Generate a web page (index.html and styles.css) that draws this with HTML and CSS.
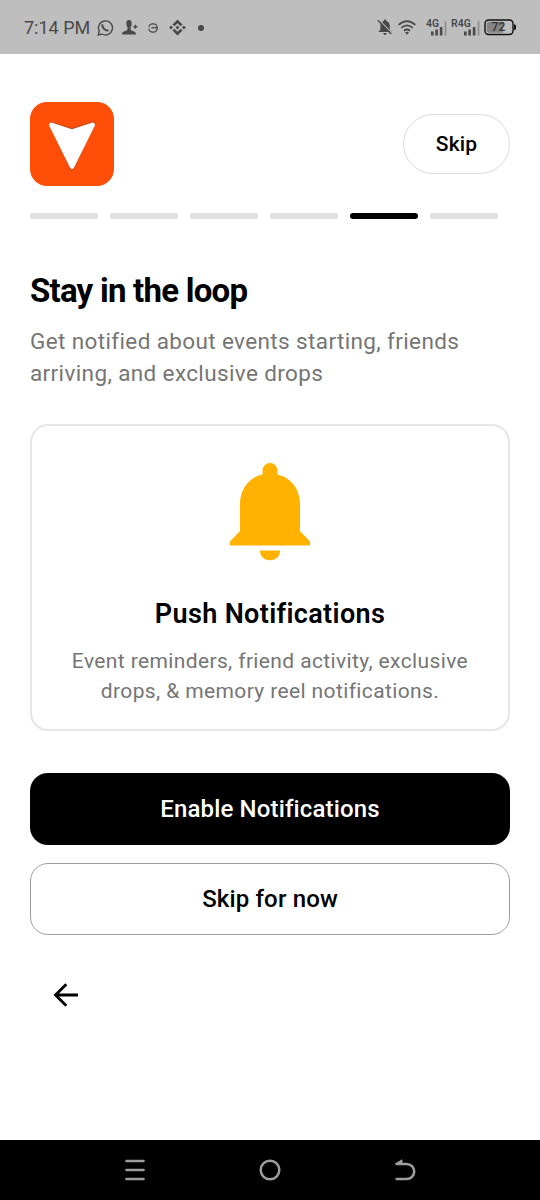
FILE: index.html
```html
<!DOCTYPE html>
<html lang="en">
<head>
<meta charset="utf-8">
<title>Stay in the loop</title>
<link rel="stylesheet" href="styles.css">
</head>
<body>
<div class="screen">
  <header class="status">
    <span class="clock">7:14 PM</span>
    <div class="status-left">
      <svg class="i-chat" width="17" height="18" viewBox="0 0 17 18" fill="none" stroke="#494949" stroke-width="1.4"><path d="M1.200 16.100l1.100-3.900A7 7 0 1 1 5 15z"/><path d="M5.600 5.400c-.7 1.500.2 3.200 1.600 4.600 1.400 1.300 3 2 4.300 1" stroke-width="1.900"/></svg>
      <svg class="i-person" width="16" height="15" viewBox="0 0 16 15" fill="#494949"><path d="M7 0C4.800 0 4.300 1.500 4.400 4c.1 2 .8 3 1.200 3.700 0 1.700-.3 2.500-1.500 3C1.500 11.700.3 11.500 0 14.500h14c-.3-3-1.600-2.800-4-3.800-1.200-.5-1.500-1.300-1.500-3C9 7 9.500 6 9.600 4 9.700 1.500 9.200 0 7 0zM12.700 4.700h1.400v1.300h1.300v1.400h-1.300v1.300h-1.400V7.400h-1.300V6h1.300z"/></svg>
      <svg class="i-e" width="10" height="10" viewBox="0 0 10 10" fill="none" stroke="#494949" stroke-width="1.300"><rect x=".8" y=".9" width="8.400" height="8.200" rx="3.800"/><path d="M3.400 4.700H9"/><path d="M.8 3.800v2" stroke="#bebebe" stroke-width="1.600"/></svg>
      <svg class="i-diamond" width="17" height="17" viewBox="0 0 17 17" fill="#494949"><path d="M8.500.4l5 5-1.900 1.900-3.100-3.100-3.100 3.100-1.900-1.900zM8.500 16.600l5-5-1.900-1.900-3.100 3.100-3.100-3.100-1.900 1.900zM8.500 6.600l1.900 1.900-1.900 1.900-1.900-1.900zM2.100 6.600L4 8.500l-1.900 1.900L.2 8.500zM14.900 6.600l1.900 1.900-1.900 1.900L13 8.500z"/></svg>
      <span class="dot"></span>
    </div>
    <div class="status-right">
      <svg class="i-mute" width="16" height="17" viewBox="0 0 16 17"><path d="M8 .6c.8 0 1.300.5 1.300 1.400 2.400.7 3.500 2.500 3.500 5v3.500l2 2.500H1.400l2-2.500V7c0-2.500 1-4.300 3.400-5C6.800 1.100 7.200.6 8 .6zM6.200 14h3.500c0 1.100-.7 1.900-1.700 1.900S6.200 15.100 6.200 14z" fill="#494949"/><path d="M1.900.7l13.400 13.600" stroke="#bebebe" stroke-width="1.200"/><path d="M.8 1.300l13.500 13.800" stroke="#494949" stroke-width="1.400"/></svg>
      <svg class="i-wifi" width="18" height="15" viewBox="0 0 18 15" fill="none" stroke="#494949" stroke-width="1.800"><path d="M.6 4.900q8.400-7.600 16.800 0M3.300 7.900q5.700-5 11.400 0M6 10.800q3-2.500 6 0"/><path d="M7 12.400q2-1.400 4 0L9 14.700z" fill="#494949" stroke="none"/></svg>
      <svg class="i-sig1" width="21" height="30" viewBox="0 -6 21 30"><text x="0" y="8" class="net">4G</text><g fill="#494949"><path d="M5 12.500h2.600v4H5zM9.300 10.500h2.600v6H9.300zM13.800 8h2.600v8.500h-2.600z"/><path d="M18.600 2.300h1.800v14.200h-1.800z" fill="#8f8f8f"/></g></svg>
      <svg class="i-sig2" width="29" height="30" viewBox="0 -6 29 30"><text x="0" y="8" class="net">R4G</text><g fill="#494949"><path d="M13 12.500h2.600v4H13zM17.300 10.500h2.600v6h-2.600zM21.800 8h2.600v8.500h-2.600z"/><path d="M26.600 2.300h1.800v14.200h-1.800z" fill="#8f8f8f"/></g></svg>
      <svg class="i-batt" width="33" height="17" viewBox="0 0 33 17"><rect x="1" y="1" width="28" height="14.500" rx="3.500" fill="#bebebe" stroke="#111" stroke-width="1.400"/><path d="M5 2.700h14v11H5q-2.300 0-2.300-2.200V5Q2.700 2.700 5 2.700z" fill="#858585"/><path d="M30 5.300q2 0 2 2v2q0 2-2 2z" fill="#111"/><text x="7.600" y="12.200" class="level">72</text></svg>
    </div>
  </header>

  <main class="content">
    <div class="top">
      <svg class="logo" width="84" height="84" viewBox="0 0 84 84"><rect width="84" height="84" rx="17" fill="#ff4e08"/><path d="M21.700 22.500L42 29 62.300 22.500 42 65z" fill="#b94a20" stroke="#b94a20" stroke-width="5.200" stroke-linejoin="round"/><path d="M21.400 22.900L42 29.700 62.600 22.900 42 64.500z" fill="#fff" stroke="#fff" stroke-width="4.600" stroke-linejoin="round"/></svg>
      <button class="skip">Skip</button>
    </div>
    <div class="steps"><i></i><i></i><i></i><i></i><i class="active"></i><i></i></div>
    <h1 class="title">Stay in the loop</h1>
    <p class="lead">Get notified about events starting, friends<br>arriving, and exclusive drops</p>
    <section class="card">
      <svg class="bell" width="80" height="98" viewBox="0 0 80 98" fill="#ffb300"><path d="M32.500 12V7.500a7.500 7.500 0 0 1 15 0V11.500C61 14.500 70 26 70 41v27l10 10.500V82.500H0v-4L10 68V41C10 26 19 14.500 32.500 11.500zM30 87.500h20c0 6-4 9.700-10 9.700S30 93.500 30 87.500z"/></svg>
      <h2 class="card-title">Push Notifications</h2>
      <p class="card-text">Event reminders, friend activity, exclusive<br>drops, &amp; memory reel notifications.</p>
    </section>
    <button class="btn primary">Enable Notifications</button>
    <button class="btn outline">Skip for now</button>
    <svg class="back" width="26" height="24" viewBox="0 0 26 24" fill="none" stroke="#000" stroke-width="2.800"><path d="M25 12H3M13.300 1.200L2.500 12l10.800 10.800"/></svg>
  </main>

  <nav class="nav">
    <svg width="22" height="24" viewBox="0 0 22 24" stroke="#9d9d9d" stroke-width="2.600" stroke-linecap="round"><path d="M2.500 3h17M2.500 12h17M2.500 21h17"/></svg>
    <svg width="22" height="22" viewBox="0 0 22 22" fill="none" stroke="#9d9d9d" stroke-width="2.500"><circle cx="11" cy="11" r="9.300"/></svg>
    <svg width="22" height="24" viewBox="0 0 22 24" fill="none" stroke="#9d9d9d" stroke-width="2.600" stroke-linecap="round"><path d="M2.700 6h10a7.500 7.500 0 0 1 0 15h-10"/><path d="M2 5.500l6-3.700v4z" fill="#9d9d9d" stroke-width="1"/></svg>
  </nav>
</div>
</body>
</html>
```
FILE: styles.css
```css
* { box-sizing: border-box; margin: 0; padding: 0; }
body { background: #fff; font-family: Roboto, sans-serif; color: #000; }
.screen { width: 540px; height: 1200px; display: flex; flex-direction: column; }

.status { height: 54px; flex: none; background: #bebebe; display: flex; align-items: center; padding: 1px 23px 0 24px; color: #494949; }
.clock { width: 73px; font-size: 18px; line-height: 22px; white-space: nowrap; }
.status-left, .status-right { display: flex; align-items: center; }
.status svg { display: block; flex: none; }
.i-person { margin-left: 8px; }
.i-e { margin-left: 10px; }
.i-diamond { margin-left: 11px; }
.dot { width: 6px; height: 6px; margin-left: 12px; border-radius: 50%; background: #494949; }
.status-right { margin-left: auto; }
.i-wifi { margin-left: 5px; }
.i-sig1 { margin-left: 10px; }
.i-sig2 { margin-left: 4px; }
.i-batt { margin-left: 4px; }
.net { font: 600 10.500px Roboto, sans-serif; fill: #494949; }
.level { font: 500 12px Roboto, sans-serif; fill: #333; }

.content { flex: 1; padding: 48px 30px 0; display: flex; flex-direction: column; }
.top { display: flex; justify-content: space-between; align-items: center; height: 84px; }
.skip { width: 107px; height: 60px; border: 1px solid #dcdcdc; border-radius: 30px; background: #fff; font: 500 21px/30px Roboto, sans-serif; letter-spacing: .15px; color: #000; }
.steps { display: flex; gap: 12px; margin-top: 27px; }
.steps i { width: 68px; height: 6px; border-radius: 3px; background: #e0e0e0; }
.steps .active { background: #000; }
.title { margin-top: 52px; font-size: 33px; line-height: 40px; font-weight: 700; letter-spacing: -.76px; }
.lead { margin-top: 15px; font-size: 22.500px; line-height: 31.500px; letter-spacing: .375px; color: #757575; white-space: nowrap; }
.card { height: 307px; margin-top: 35px; padding-top: 37px; border: 2px solid #e6e6e6; border-radius: 18px; display: flex; flex-direction: column; align-items: center; text-align: center; }
.bell { flex: none; }
.card-title { margin-top: 36px; font-size: 27px; line-height: 34px; font-weight: 600; letter-spacing: .35px; }
.card-text { margin-top: 15px; font-size: 21px; line-height: 30px; letter-spacing: .375px; color: #757575; white-space: nowrap; }
.btn { height: 72px; flex: none; border-radius: 18px; font: 500 24px/30px Roboto, sans-serif; letter-spacing: .15px; }
.primary { margin-top: 42px; border: 0; background: #000; color: #fff; }
.outline { margin-top: 18px; border: 1.500px solid #9e9e9e; background: #fff; color: #000; }
.back { margin: 48px 0 0 23px; }

.nav { height: 60px; flex: none; background: #000; display: flex; justify-content: space-between; align-items: center; padding: 0 124px; }
```
